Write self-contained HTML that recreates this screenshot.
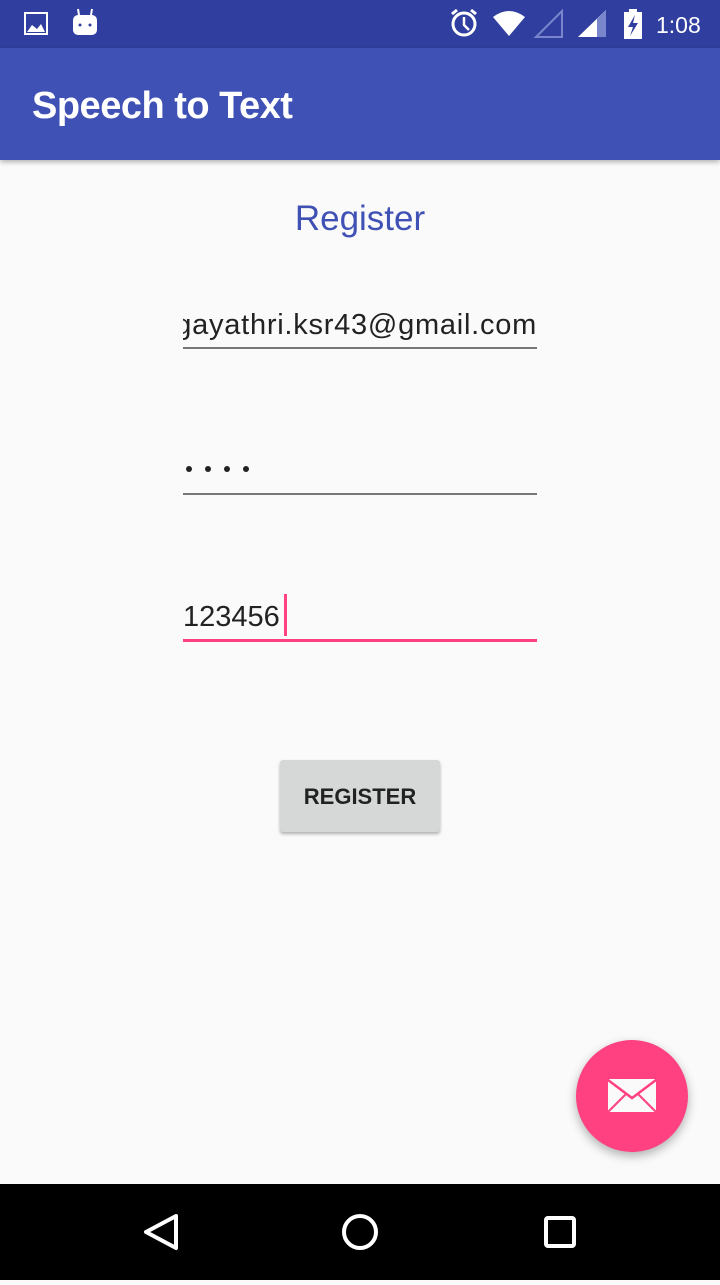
<!DOCTYPE html>
<html><head><meta charset="utf-8"><style>
*{margin:0;padding:0;box-sizing:border-box}
body{width:720px;height:1280px;background:#fafafa;font-family:"Liberation Sans",sans-serif;position:relative;overflow:hidden}
.sb{position:absolute;top:0;left:0;width:720px;height:48px;background:#303f9f}
.ab{position:absolute;top:48px;left:0;width:720px;height:112px;background:#3f51b5;box-shadow:0 2px 5px rgba(0,0,0,.3)}
.ab h1{position:absolute;left:32px;top:37px;color:#fff;font-size:38px;font-weight:bold;letter-spacing:-.5px}
.t{position:absolute;color:#3f51b5;font-size:35px;left:0;width:720px;text-align:center;top:199px}
.f{position:absolute;left:183px;width:354px;font-size:29px;color:#222;overflow:hidden;white-space:nowrap}
.line{position:absolute;left:183px;width:354px;height:2px;background:#777}
.btn{position:absolute;left:280px;top:760px;width:160px;height:72px;background:#d6d7d7;border-radius:3px;box-shadow:0 2px 3px rgba(0,0,0,.3);text-align:center;line-height:74px;font-size:22px;font-weight:bold;color:#222}
.fab{position:absolute;left:576px;top:1040px;width:112px;height:112px;border-radius:50%;background:#ff4081;box-shadow:0 4px 10px rgba(0,0,0,.3)}
.nav{position:absolute;top:1184px;left:0;width:720px;height:96px;background:#000}
</style></head><body>
<div class="sb">
<svg width="720" height="48" style="position:absolute;left:0;top:0">
<rect x="25" y="13" width="22" height="21" fill="none" stroke="#fff" stroke-width="2"/>
<path d="M27 32 L32 25 L37 29 L41 24 L45 32Z" fill="#fff"/>
<rect x="73" y="15" width="24" height="20" rx="5" fill="#fff"/>
<line x1="78" y1="9" x2="79" y2="15" stroke="#fff" stroke-width="2"/><line x1="92" y1="9" x2="91" y2="15" stroke="#fff" stroke-width="2"/>
<circle cx="80" cy="25" r="1.5" fill="#303f9f"/><circle cx="90" cy="25" r="1.5" fill="#303f9f"/>
<circle cx="464" cy="24" r="11" fill="none" stroke="#fff" stroke-width="3"/>
<path d="M464 17 V25 L469 30" fill="none" stroke="#fff" stroke-width="2.5"/>
<path d="M452 14 L457 10 M476 14 L471 10" stroke="#fff" stroke-width="3"/>
<path d="M493 17 Q509 5 525 17 L509 36Z" fill="#fff"/>
<path d="M536 37 L562 11 V37Z" fill="none" stroke="#7986cb" stroke-width="2"/>
<path d="M578 37 L606 10 V37Z" fill="#fff"/><path d="M597 19 L606 10 V37 H597Z" fill="#7986cb"/>
<rect x="624" y="12" width="18" height="27" fill="#fff"/><rect x="629" y="9" width="8" height="4" fill="#fff"/>
<path d="M635 15 L628 27 H633 L630 36 L638 23 H633Z" fill="#303f9f"/>
<text x="656" y="33" fill="#fff" font-size="23" font-family="Liberation Sans">1:08</text>
</svg></div>
<div class="ab"><h1>Speech to Text</h1></div>
<div class="t">Register</div>
<div class="f" style="top:309px;text-align:right;direction:rtl"><span style="direction:ltr;unicode-bidi:embed;letter-spacing:0.75px">gayathri.ksr43@gmail.com</span></div>
<div class="line" style="top:347px"></div>
<svg style="position:absolute;left:183px;top:460px" width="80" height="20">
<circle cx="6" cy="9" r="3" fill="#222"/><circle cx="25" cy="9" r="3" fill="#222"/><circle cx="44" cy="9" r="3" fill="#222"/><circle cx="63" cy="9" r="3" fill="#222"/></svg>
<div class="line" style="top:493px"></div>
<div class="f" style="top:601px;height:40px;overflow:visible">123456</div>
<div style="position:absolute;left:284px;top:594px;width:3px;height:42px;background:#ff4081"></div>
<div class="line" style="top:639px;height:3px;background:#ff4081"></div>
<div class="btn">REGISTER</div>
<div class="fab"><svg width="112" height="112">
<rect x="32" y="39" width="48" height="33" rx="2" fill="#fafafa"/>
<path d="M32 40 L56 58 L80 40" fill="none" stroke="#ff4081" stroke-width="2.5"/>
<path d="M32 72 L50 54 M80 72 L62 54" stroke="#ff4081" stroke-width="2"/>
</svg></div>
<div class="nav"><svg width="720" height="96">
<path d="M176 32 L146 48 L176 64Z" fill="none" stroke="#fff" stroke-width="4" stroke-linejoin="round"/>
<circle cx="360" cy="48" r="16" fill="none" stroke="#fff" stroke-width="4"/>
<rect x="546" y="34" width="28" height="28" fill="none" stroke="#fff" stroke-width="4" rx="2"/>
</svg></div>
</body></html>
